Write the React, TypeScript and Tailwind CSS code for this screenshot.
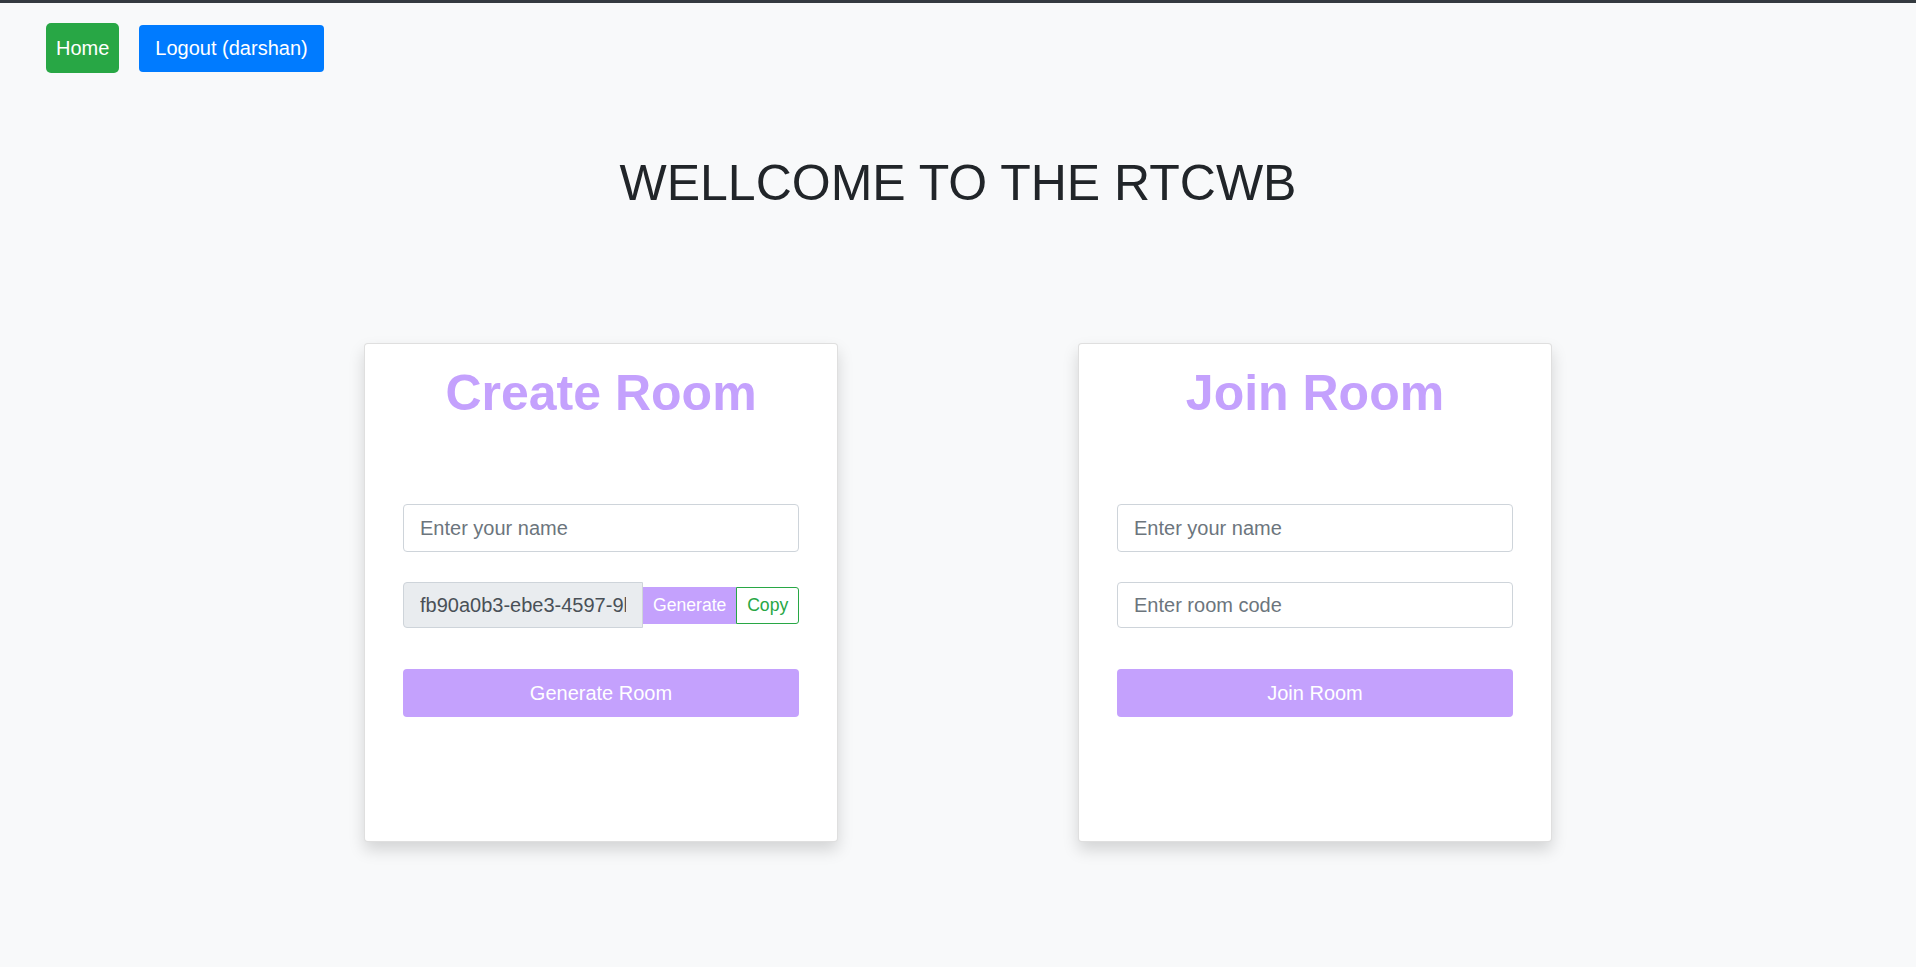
import React from 'react'

const lavender = 'bg-[#c4a1fd]'

const CreateCard = () => {
  return (
    <div className="w-[474px] h-[499px] bg-white border border-[rgba(0,0,0,0.125)] rounded-[4px] shadow-[0_8px_16px_rgba(0,0,0,0.15)] px-[38px] pt-[19px]">
      <h2 className="text-center text-[50px] leading-[60px] font-bold text-[#c4a1fd]">Create Room</h2>
      <input
        className="mt-[81px] block w-full h-[48px] px-4 text-[20px] text-[#495057] bg-white border border-[#ced4da] rounded-[4px] placeholder:text-[#6c757d] outline-none"
        placeholder="Enter your name"
      />
      <div className="mt-[30px] flex items-center">
        <input
          readOnly
          value="fb90a0b3-ebe3-4597-9b1c-7e2d4f6a8c10"
          className="w-[240px] h-[46px] px-4 text-[20px] text-[#495057] bg-[#e9ecef] border border-[#ced4da] rounded-l-[4px] outline-none"
        />
        <button className={`${lavender} h-[37px] px-[10px] text-[17.6px] text-white`}>Generate</button>
        <button className="h-[37px] flex-1 bg-white border border-[#28a745] text-[#28a745] text-[17.6px] rounded-r-[3px]">Copy</button>
      </div>
      <button className={`mt-[41px] w-full h-[48px] ${lavender} text-white text-[20px] rounded-[4px]`}>Generate Room</button>
    </div>
  )
}

const JoinCard = () => {
  return (
    <div className="w-[474px] h-[499px] bg-white border border-[rgba(0,0,0,0.125)] rounded-[4px] shadow-[0_8px_16px_rgba(0,0,0,0.15)] px-[38px] pt-[19px]">
      <h2 className="text-center text-[50px] leading-[60px] font-bold text-[#c4a1fd]">Join Room</h2>
      <input
        className="mt-[81px] block w-full h-[48px] px-4 text-[20px] text-[#495057] bg-white border border-[#ced4da] rounded-[4px] placeholder:text-[#6c757d] outline-none"
        placeholder="Enter your name"
      />
      <input
        className="mt-[30px] block w-full h-[46px] px-4 text-[20px] text-[#495057] bg-white border border-[#ced4da] rounded-[4px] placeholder:text-[#6c757d] outline-none"
        placeholder="Enter room code"
      />
      <button className={`mt-[41px] w-full h-[48px] ${lavender} text-white text-[20px] rounded-[4px]`}>Join Room</button>
    </div>
  )
}

const App = () => {
  return (
    <div className="min-h-screen bg-[#f8f9fa] border-t-[3px] border-[#343a40] font-['Liberation_Sans',Arial,sans-serif]">
      <nav className="pt-[20px] pl-[46px] flex items-center gap-[20px]">
        <a className="h-[50px] px-[10px] flex items-center bg-[#28a745] text-white text-[20px] rounded-[5px] cursor-pointer">Home</a>
        <button className="h-[47px] px-4 bg-[#007bff] text-white text-[20px] rounded-[4px]">Logout (darshan)</button>
      </nav>

      <h1 className="mt-[80px] text-center text-[50px] leading-[60px] text-[#212529]">WELLCOME TO THE RTCWB</h1>

      <div className="mt-[130px] flex justify-center gap-[240px]">
        <CreateCard />
        <JoinCard />
      </div>
    </div>
  )
}

export default App
